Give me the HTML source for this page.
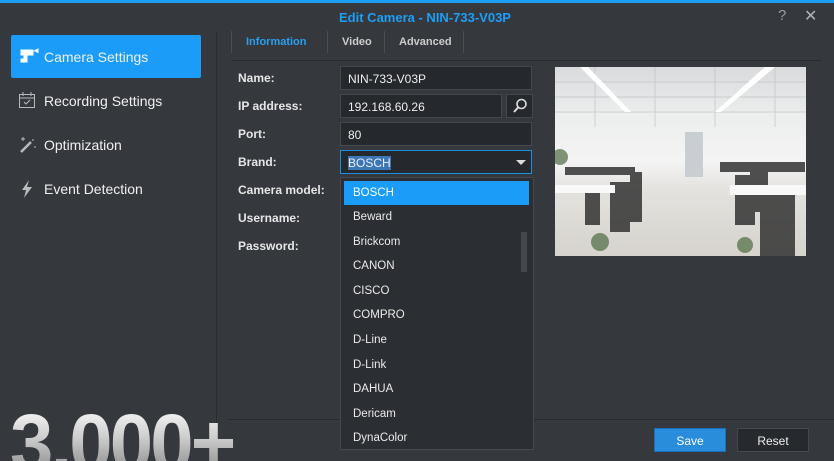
<!DOCTYPE html>
<html><head><meta charset="utf-8"><style>
*{margin:0;padding:0;box-sizing:border-box}
html{width:834px;height:461px;overflow:hidden}
body{width:834px;height:461px;overflow:hidden;background:#35383d;font-family:"Liberation Sans",sans-serif;color:#e8e9ea;position:relative}
.a{position:absolute}
.lbl{position:absolute;left:238px;font-size:12px;font-weight:bold;color:#e6e6e6}
.inp{position:absolute;left:340px;width:192px;height:24px;background:#25282c;border:1px solid #45484d;font-size:12px;color:#eee;padding:5px 0 0 7px}
.side{position:absolute;left:44px;font-size:14px;color:#f0f0f0}
.dd div{height:24.6px;font-size:11.5px;padding:6px 0 0 9px;color:#eaeaea}
</style></head><body>
<div class="a" style="left:0;top:0;width:834px;height:3px;background:#1b9cf0"></div>
<div class="a" style="left:0;top:10px;width:834px;text-align:center;font-size:13px;font-weight:bold;color:#1e9ef5;padding-left:16px">Edit Camera - NIN-733-V03P</div>
<div class="a" style="left:778px;top:7px;font-size:15px;color:#9a9da1">?</div>
<div class="a" style="left:804px;top:6px;font-size:16px;color:#b0b3b6">✕</div>
<div class="a" style="left:216px;top:31px;width:1px;height:430px;background:#2a2c30"></div>
<div class="a" style="left:11px;top:35px;width:190px;height:43px;background:#1b9cf8;border-radius:2px"></div>
<svg class="a" style="left:20px;top:48px" width="20" height="16"><path d="M1 2h12v5H1z M4 8h3v6H1v-3h3z M14 3l4-2v4" fill="#fff" stroke="#fff" stroke-width="1"/></svg>
<div class="side" style="top:49px">Camera Settings</div>
<svg class="a" style="left:18px;top:91px" width="18" height="18"><rect x="1.5" y="3.5" width="15" height="13" fill="none" stroke="#b8bbbe"/><path d="M1.5 7h15M5 1v4M13 1v4M6 11l2 2 4-4" stroke="#b8bbbe" fill="none"/></svg>
<div class="side" style="top:93px">Recording Settings</div>
<svg class="a" style="left:18px;top:136px" width="20" height="18"><path d="M3 16L13 6" stroke="#b8bbbe" stroke-width="2.5"/><path d="M3 3h4M5 1v4M15 3v2M17 10v2" stroke="#b8bbbe"/></svg>
<div class="side" style="top:137px">Optimization</div>
<svg class="a" style="left:20px;top:180px" width="14" height="18"><path d="M9 0L2 10h4l-2 8 8-11H7z" fill="#b8bbbe"/></svg>
<div class="side" style="top:181px">Event Detection</div>
<div class="a" style="left:231px;top:31px;width:1px;height:22px;background:#4a4d52"></div>
<div class="a" style="left:246px;top:36px;font-size:11px;font-weight:bold;color:#2a9ff0">Information</div>
<div class="a" style="left:327px;top:31px;width:1px;height:22px;background:#4a4d52"></div>
<div class="a" style="left:342px;top:36px;font-size:11px;font-weight:bold;color:#ccc">Video</div>
<div class="a" style="left:384px;top:31px;width:1px;height:22px;background:#4a4d52"></div>
<div class="a" style="left:399px;top:36px;font-size:11px;font-weight:bold;color:#ccc">Advanced</div>
<div class="a" style="left:463px;top:31px;width:1px;height:22px;background:#4a4d52"></div>
<div class="a" style="left:231px;top:60px;width:590px;height:1px;background:#27292d"></div>
<div class="lbl" style="top:71px">Name:</div>
<div class="lbl" style="top:99px">IP address:</div>
<div class="lbl" style="top:127px">Port:</div>
<div class="lbl" style="top:155px">Brand:</div>
<div class="lbl" style="top:183px">Camera model:</div>
<div class="lbl" style="top:211px">Username:</div>
<div class="lbl" style="top:239px">Password:</div>
<div class="inp" style="top:66px">NIN-733-V03P</div>
<div class="inp" style="top:94px;width:162px">192.168.60.26</div>
<div class="a" style="left:506px;top:94px;width:27px;height:24px;background:#25282c;border:1px solid #45484d"></div>
<svg class="a" style="left:511px;top:97px" width="18" height="18"><circle cx="10.5" cy="7" r="4.5" fill="none" stroke="#ddd" stroke-width="1.6"/><path d="M7.5 10L3 15" stroke="#ddd" stroke-width="2"/></svg>
<div class="inp" style="top:122px">80</div>
<div class="inp" style="top:150px;border-color:#1a8fe0"><span style="background:#3c76b5;color:#eef">BOSCH</span></div>
<svg class="a" style="left:515px;top:159px" width="12" height="8"><path d="M1 1h10L6 6z" fill="#ddd"/></svg>
<div class="a" style="left:555px;top:67px;width:251px;height:189px;overflow:hidden;background:linear-gradient(#d8dadc 0,#eceded 25%,#f4f4f4 50%,#e4e2de 65%,#d6d3cd 100%)">
<svg width="251" height="189"><g stroke="#bfc3c6" stroke-width="1" opacity=".7"><path d="M0 15h251M0 30h251M0 45h251M40 0v60M100 0v60M160 0v60M220 0v60"/></g><path d="M25 0L70 45h6L33 0zM210 0L160 45h6L220 0z" fill="#fff"/><rect x="130" y="65" width="18" height="45" fill="#c9ced2"/><g fill="#333" opacity=".85"><rect x="10" y="100" width="70" height="8"/><rect x="165" y="95" width="85" height="10"/><rect x="55" y="115" width="20" height="50"/><rect x="75" y="105" width="12" height="50"/><rect x="180" y="108" width="20" height="50"/><rect x="205" y="118" width="35" height="71"/><rect x="195" y="100" width="18" height="45"/><rect x="30" y="118" width="15" height="40"/></g><rect x="0" y="118" width="60" height="8" fill="#f8f8f8"/><rect x="175" y="118" width="76" height="10" fill="#f8f8f8"/><g fill="#4d6b40" opacity=".7"><circle cx="45" cy="175" r="9"/><circle cx="190" cy="178" r="8"/><circle cx="5" cy="90" r="8"/></g></svg></div>
<div class="a dd" style="left:340px;top:177px;width:194px;height:273px;background:#2b2e32;border:1px solid #45484d;padding:3px 4px 0 3px;overflow:hidden">
<div style="background:#1b9cf8;color:#fff;height:24px">BOSCH</div>
<div>Beward</div><div>Brickcom</div><div>CANON</div><div>CISCO</div><div>COMPRO</div><div>D-Line</div><div>D-Link</div><div>DAHUA</div><div>Dericam</div><div>DynaColor</div>
</div>
<div class="a" style="left:521px;top:232px;width:6px;height:40px;background:#44474c"></div>
<div class="a" style="left:229px;top:419px;width:110px;height:1px;background:#282a2e"></div>
<div class="a" style="left:534px;top:419px;width:300px;height:1px;background:#282a2e"></div>
<div class="a" style="left:654px;top:428px;width:72px;height:24px;background:#2a8ddb;border:1px solid #1a70b8;font-size:12px;color:#fff;text-align:center;padding-top:5px">Save</div>
<div class="a" style="left:737px;top:428px;width:72px;height:24px;background:#26292d;border:1px solid #44474b;font-size:12px;color:#eee;text-align:center;padding-top:5px">Reset</div>
<div class="a" style="left:0;top:390px;width:260px;height:71px;overflow:hidden">
<div class="a" style="left:10px;top:13px;font-size:82px;font-weight:bold;letter-spacing:-3px;line-height:1;white-space:nowrap;transform:scaleX(0.95);transform-origin:left top;background:linear-gradient(#ffffff 0,#d0d0d0 40%,#9a9a9a 75%);-webkit-background-clip:text;background-clip:text;color:transparent;">3,000+</div>
</div>
</body></html>
